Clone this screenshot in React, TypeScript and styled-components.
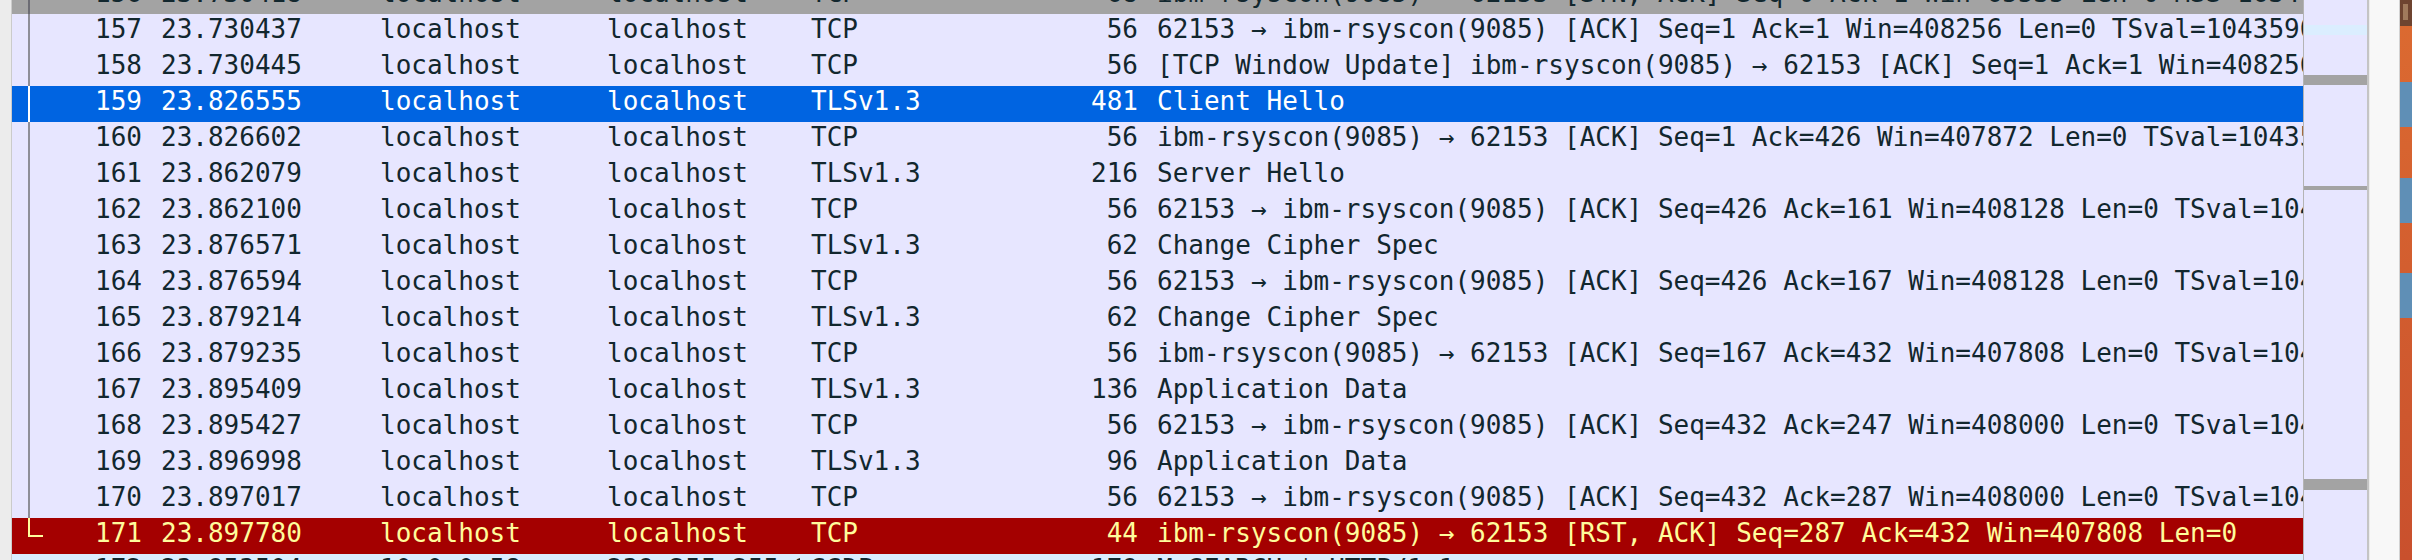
import React from 'react';
import styled, { createGlobalStyle } from 'styled-components';

const GlobalStyle = createGlobalStyle`
  html, body {
    margin: 0;
    padding: 0;
    background: #f6f6f6;
  }
  body {
    font-family: "DejaVu Sans Mono", "Liberation Mono", monospace;
  }
`;

type Kind = 'normal' | 'marked' | 'selected' | 'bad' | 'udp';
type Rel = 'none' | 'line' | 'end';

const palette: Record<Kind, { bg: string; fg: string; line: string }> = {
  normal: { bg: '#e7e6ff', fg: '#12272e', line: '#8e8e98' },
  marked: { bg: '#a3a3a3', fg: '#12272e', line: '#6c6c74' },
  selected: { bg: '#0064e1', fg: '#ffffff', line: '#ffffff' },
  bad: { bg: '#a40000', fg: '#fffc9c', line: '#fffc9c' },
  udp: { bg: '#daeeff', fg: '#12272e', line: 'transparent' },
};

interface Packet {
  no: number;
  time: string;
  src: string;
  dst: string;
  proto: string;
  len: number;
  info: string;
  kind: Kind;
  rel: Rel;
}

const ACK_TAIL = 'TSecr=1043590833';

const packets: Packet[] = [
  { no: 156, time: '23.730418', src: 'localhost', dst: 'localhost', proto: 'TCP', len: 68, info: 'ibm-rsyscon(9085) → 62153 [SYN, ACK] Seq=0 Ack=1 Win=65535 Len=0 MSS=16344 WS=64 TSval=1043590833 TSecr=1043590833 SACK_PERM', kind: 'marked', rel: 'line' },
  { no: 157, time: '23.730437', src: 'localhost', dst: 'localhost', proto: 'TCP', len: 56, info: `62153 → ibm-rsyscon(9085) [ACK] Seq=1 Ack=1 Win=408256 Len=0 TSval=1043590833 ${ACK_TAIL}`, kind: 'normal', rel: 'line' },
  { no: 158, time: '23.730445', src: 'localhost', dst: 'localhost', proto: 'TCP', len: 56, info: `[TCP Window Update] ibm-rsyscon(9085) → 62153 [ACK] Seq=1 Ack=1 Win=408256 Len=0 TSval=1043590833 ${ACK_TAIL}`, kind: 'normal', rel: 'line' },
  { no: 159, time: '23.826555', src: 'localhost', dst: 'localhost', proto: 'TLSv1.3', len: 481, info: 'Client Hello', kind: 'selected', rel: 'line' },
  { no: 160, time: '23.826602', src: 'localhost', dst: 'localhost', proto: 'TCP', len: 56, info: `ibm-rsyscon(9085) → 62153 [ACK] Seq=1 Ack=426 Win=407872 Len=0 TSval=1043590929 ${ACK_TAIL}`, kind: 'normal', rel: 'line' },
  { no: 161, time: '23.862079', src: 'localhost', dst: 'localhost', proto: 'TLSv1.3', len: 216, info: 'Server Hello', kind: 'normal', rel: 'line' },
  { no: 162, time: '23.862100', src: 'localhost', dst: 'localhost', proto: 'TCP', len: 56, info: `62153 → ibm-rsyscon(9085) [ACK] Seq=426 Ack=161 Win=408128 Len=0 TSval=1043590965 ${ACK_TAIL}`, kind: 'normal', rel: 'line' },
  { no: 163, time: '23.876571', src: 'localhost', dst: 'localhost', proto: 'TLSv1.3', len: 62, info: 'Change Cipher Spec', kind: 'normal', rel: 'line' },
  { no: 164, time: '23.876594', src: 'localhost', dst: 'localhost', proto: 'TCP', len: 56, info: `62153 → ibm-rsyscon(9085) [ACK] Seq=426 Ack=167 Win=408128 Len=0 TSval=1043590979 ${ACK_TAIL}`, kind: 'normal', rel: 'line' },
  { no: 165, time: '23.879214', src: 'localhost', dst: 'localhost', proto: 'TLSv1.3', len: 62, info: 'Change Cipher Spec', kind: 'normal', rel: 'line' },
  { no: 166, time: '23.879235', src: 'localhost', dst: 'localhost', proto: 'TCP', len: 56, info: `ibm-rsyscon(9085) → 62153 [ACK] Seq=167 Ack=432 Win=407808 Len=0 TSval=1043590982 ${ACK_TAIL}`, kind: 'normal', rel: 'line' },
  { no: 167, time: '23.895409', src: 'localhost', dst: 'localhost', proto: 'TLSv1.3', len: 136, info: 'Application Data', kind: 'normal', rel: 'line' },
  { no: 168, time: '23.895427', src: 'localhost', dst: 'localhost', proto: 'TCP', len: 56, info: `62153 → ibm-rsyscon(9085) [ACK] Seq=432 Ack=247 Win=408000 Len=0 TSval=1043590998 ${ACK_TAIL}`, kind: 'normal', rel: 'line' },
  { no: 169, time: '23.896998', src: 'localhost', dst: 'localhost', proto: 'TLSv1.3', len: 96, info: 'Application Data', kind: 'normal', rel: 'line' },
  { no: 170, time: '23.897017', src: 'localhost', dst: 'localhost', proto: 'TCP', len: 56, info: `62153 → ibm-rsyscon(9085) [ACK] Seq=432 Ack=287 Win=408000 Len=0 TSval=1043590999 ${ACK_TAIL}`, kind: 'normal', rel: 'line' },
  { no: 171, time: '23.897780', src: 'localhost', dst: 'localhost', proto: 'TCP', len: 44, info: 'ibm-rsyscon(9085) → 62153 [RST, ACK] Seq=287 Ack=432 Win=407808 Len=0', kind: 'bad', rel: 'end' },
  { no: 172, time: '23.953504', src: '10.0.0.58', dst: '239.255.255.250', proto: 'SSDP', len: 179, info: 'M-SEARCH * HTTP/1.1', kind: 'udp', rel: 'none' },
];

const Screen = styled.div`
  display: flex;
  width: 2412px;
  height: 560px;
  overflow: hidden;
`;

const LeftEdge = styled.div`
  flex: none;
  width: 11px;
  background: #ececec;
  border-right: 1px solid #cbcbcb;
`;

const PacketList = styled.div`
  flex: none;
  width: 2291px;
  height: 560px;
  overflow: hidden;
  background: #e7e6ff;
`;

const Rows = styled.div`
  display: flex;
  flex-direction: column;
  margin-top: -22px;
`;

const Row = styled.div<{ $kind: Kind }>`
  display: grid;
  grid-template-columns: 138px 222px 228px 200px 200px 146px 1157px;
  height: 36px;
  background: ${(p) => palette[p.$kind].bg};
  color: ${(p) => palette[p.$kind].fg};
  font-size: 26px;
  line-height: 30px;
  white-space: nowrap;
`;

const Cell = styled.div`
  overflow: hidden;
  text-overflow: clip;
`;

const NoCell = styled(Cell)`
  display: flex;
  align-items: flex-start;
`;

const NoText = styled.span`
  flex: 1;
  text-align: right;
  padding-right: 8px;
`;

const TimeCell = styled(Cell)`
  padding-left: 11px;
`;

const AddrCell = styled(Cell)<{ $pad: number }>`
  padding-left: ${(p) => p.$pad}px;
`;

const ProtoCell = styled(Cell)`
  padding-left: 11px;
`;

const LenCell = styled(Cell)`
  text-align: right;
  padding-right: 8px;
`;

const InfoCell = styled(Cell)`
  padding-left: 11px;
`;

const RelMark = styled.svg`
  flex: none;
  display: block;
`;

const Minimap = styled.div`
  flex: none;
  width: 63px;
  height: 560px;
  border-left: 1px solid #b4b4b4;
  border-right: 2px solid #c4c4c4;
  background: #e7e6ff;
`;

const WindowEdge = styled.div`
  flex: none;
  width: 29px;
  height: 560px;
  background: #f8f8f8;
  border-left: 1px solid #ececec;
  border-right: 1px solid #d2d2d2;
`;

const Desktop = styled.svg`
  flex: none;
  display: block;
`;

function RelIndicator({ rel, color }: { rel: Rel; color: string }) {
  return (
    <RelMark width="40" height="36" viewBox="0 0 40 36">
      {rel === 'line' && <line x1="17" y1="0" x2="17" y2="36" stroke={color} strokeWidth="2" />}
      {rel === 'end' && (
        <path d="M17 0 V18 H31" fill="none" stroke={color} strokeWidth="2" />
      )}
    </RelMark>
  );
}

function PacketRow({ p }: { p: Packet }) {
  return (
    <Row $kind={p.kind}>
      <NoCell>
        <RelIndicator rel={p.rel} color={palette[p.kind].line} />
        <NoText>{p.no}</NoText>
      </NoCell>
      <TimeCell>{p.time}</TimeCell>
      <AddrCell $pad={8}>{p.src}</AddrCell>
      <AddrCell $pad={7}>{p.dst}</AddrCell>
      <ProtoCell>{p.proto}</ProtoCell>
      <LenCell>{p.len}</LenCell>
      <InfoCell>{p.info}</InfoCell>
    </Row>
  );
}

const App = () => {
  return (
    <>
      <GlobalStyle />
      <Screen>
        <LeftEdge />
        <PacketList>
          <Rows>
            {packets.map((p) => (
              <PacketRow key={p.no} p={p} />
            ))}
          </Rows>
        </PacketList>
        <Minimap>
          <svg width="63" height="560" viewBox="0 0 63 560" style={{ display: 'block' }}>
            <rect x="0" y="25" width="63" height="10" fill="#dbeeff" />
            <rect x="0" y="75" width="63" height="10" fill="#a3a3a3" />
            <rect x="0" y="186" width="63" height="4" fill="#a3a3a3" />
            <rect x="0" y="479" width="63" height="11" fill="#a3a3a3" />
          </svg>
        </Minimap>
        <WindowEdge />
        <Desktop width="12" height="560" viewBox="0 0 12 560">
          <defs>
            <linearGradient id="wall" x1="0" y1="0" x2="0" y2="1">
              <stop offset="0" stopColor="#dc6b31" />
              <stop offset="1" stopColor="#c9502d" />
            </linearGradient>
          </defs>
          <rect x="0" y="0" width="12" height="560" fill="url(#wall)" />
          <rect x="0" y="0" width="12" height="26" fill="#6e4430" />
          <rect x="3" y="4" width="5" height="16" fill="#a07a5c" />
          <rect x="0" y="82" width="12" height="45" fill="#5f8fb6" />
          <rect x="0" y="178" width="12" height="45" fill="#5f8fb6" />
          <rect x="0" y="273" width="12" height="45" fill="#5f8fb6" />
        </Desktop>
      </Screen>
    </>
  );
};

export default App;
